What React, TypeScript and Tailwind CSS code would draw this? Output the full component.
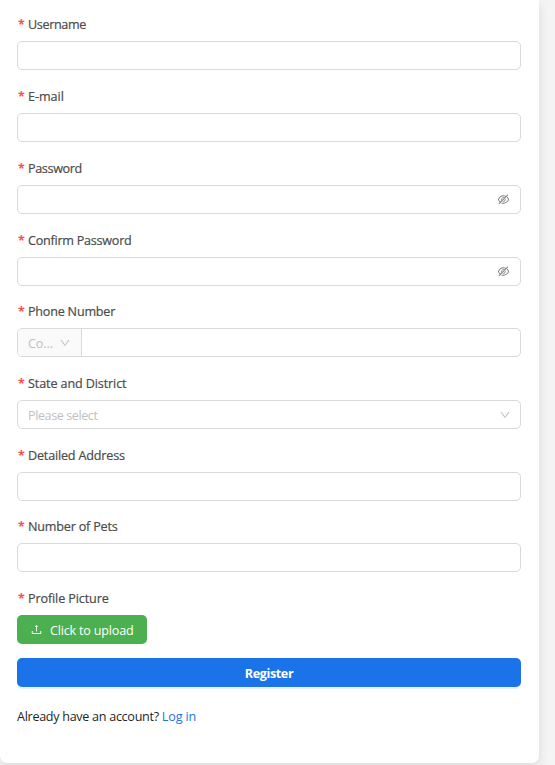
import type { ReactNode } from 'react';
import { AiOutlineDown, AiOutlineEyeInvisible, AiOutlineUpload } from 'react-icons/ai';

interface FieldProps {
  label: string;
  tracking: string;
  height?: string;
  children: ReactNode;
}

const box = 'flex h-[29px] w-full shrink-0 items-center rounded-[5px] border border-[#d9d9d9] bg-white';

function Field({ label, tracking, height = 'h-[72px]', children }: FieldProps) {
  return (
    <div className={`flex flex-col ${height}`}>
      <div className="flex h-[29px] shrink-0 items-start pt-[3px] text-[12.6px] leading-[20px] text-[#4b4b4b]">
        <span className="w-[11px] shrink-0 pl-px text-[12.5px] font-bold text-[#ff4d4f]">*</span>
        <span className={`whitespace-nowrap font-medium [-webkit-text-stroke:0.2px] ${tracking}`}>{label}</span>
      </div>
      {children}
    </div>
  );
}

function PasswordBox() {
  return (
    <div className={`${box} justify-end pr-[10px]`}>
      <AiOutlineEyeInvisible className="size-[13px] text-[#7a7a7a]" />
    </div>
  );
}

export default function App() {
  return (
    <div className="h-[765px] w-[555px] overflow-hidden bg-[#f4f4f4] font-['Open_Sans','Noto_Sans',sans-serif] text-[12.6px]">
      <main className="flex h-[763px] w-[539px] flex-col rounded-b-[7px] bg-white pl-[17px] pr-[18px] pt-[12px] shadow-[0_4px_11px_rgba(0,0,0,0.1)]">
        <form className="flex flex-col">
          <Field label="Username" tracking="tracking-[-0.35px]">
            <div className={box} />
          </Field>
          <Field label="E-mail" tracking="tracking-[-0.05px]">
            <div className={box} />
          </Field>
          <Field label="Password" tracking="tracking-[-0.35px]">
            <PasswordBox />
          </Field>
          <Field label="Confirm Password" tracking="tracking-[-0.25px]" height="h-[71px]">
            <PasswordBox />
          </Field>
          <Field label="Phone Number" tracking="tracking-[-0.22px]">
            <div className={`${box} overflow-hidden`}>
              <div className="flex h-full w-[64px] shrink-0 items-center justify-between border-r border-[#d9d9d9] bg-[#fafafa] px-[10px] text-[#bfbfbf]">
                <span className="pt-[3px] tracking-[-0.1px]">Co...</span>
                <AiOutlineDown className="size-[12px]" />
              </div>
            </div>
          </Field>
          <Field label="State and District" tracking="tracking-[-0.12px]">
            <div className={`${box} justify-between pl-[10px] pr-[9px] text-[#bfbfbf]`}>
              <span className="pt-[3px] tracking-[-0.42px]">Please select</span>
              <AiOutlineDown className="size-[12px]" />
            </div>
          </Field>
          <Field label="Detailed Address" tracking="tracking-[-0.18px]" height="h-[71px]">
            <div className={box} />
          </Field>
          <Field label="Number of Pets" tracking="tracking-[-0.2px]">
            <div className={box} />
          </Field>
          <Field label="Profile Picture" tracking="tracking-[-0.12px]">
            <button type="button" className="flex h-[29px] w-[130px] shrink-0 items-center rounded-[5px] bg-[#4caf50] pl-[13px] text-white shadow-[0_2px_0_rgba(0,0,0,0.02)]">
              <AiOutlineUpload className="mr-[7px] size-[13px]" />
              <span className="whitespace-nowrap pt-[3px] tracking-[-0.2px]">Click to upload</span>
            </button>
          </Field>
          <button type="button" className="h-[29px] w-full rounded-[5px] bg-[#1a73e8] pt-[3px] font-bold tracking-[-0.4px] text-white shadow-[0_2px_0_rgba(5,145,255,0.1)]">
            Register
          </button>
        </form>
        <p className="mt-[20px] whitespace-nowrap leading-[20px] text-[#1f1f1f]">
          <span className="tracking-[-0.3px]">Already have an account? </span>
          <a className="tracking-[-0.15px] text-[#1a73e8]">Log in</a>
        </p>
      </main>
    </div>
  );
}
